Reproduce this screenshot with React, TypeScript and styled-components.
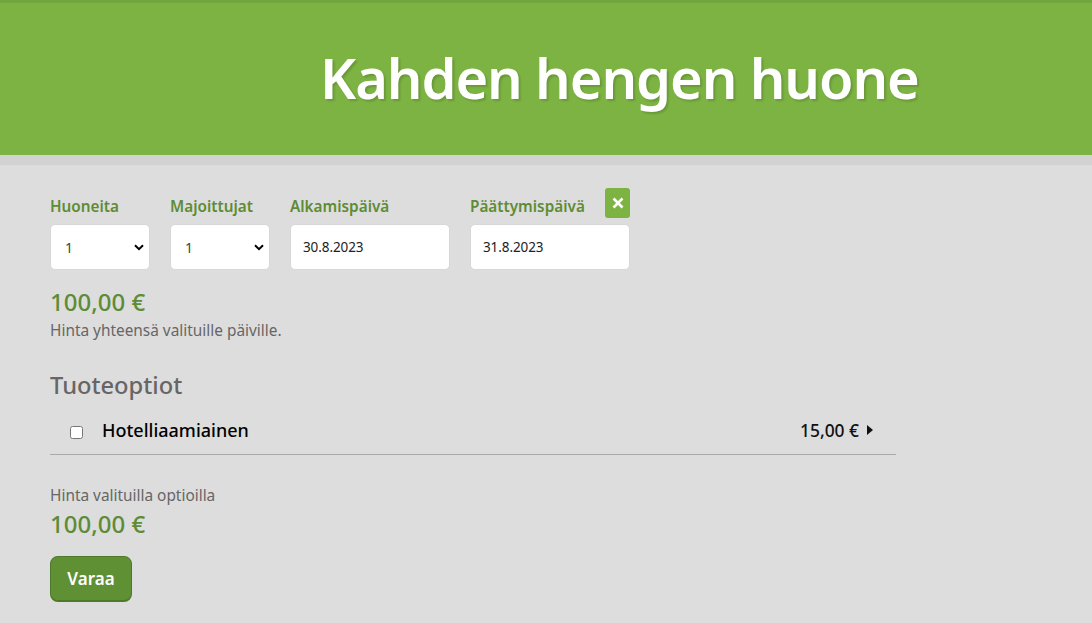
import React from "react";
import styled, { createGlobalStyle } from "styled-components";

const Global = createGlobalStyle`
  html, body { margin: 0; padding: 0; background: #dddddd; }
  body { font-family: "Noto Sans", "Open Sans", sans-serif; height: 623px; overflow: hidden; }
  * { box-sizing: border-box; }
`;

const Header = styled.header`
  height: 165px;
  background: #7cb342;
  border-top: 3px solid #70a63c;
  border-bottom: 10px solid #d2d2d2;
  padding: 42px 0 0 320px;
`;
const Title = styled.h1`
  margin: 0;
  font-size: 56px;
  line-height: 64px;
  font-weight: 600;
  letter-spacing: -1.1px;
  color: #fff;
  text-shadow: 2px 2px 2px rgba(0, 0, 0, 0.15);
  white-space: nowrap;
`;
const Main = styled.main`
  padding: 23px 0 0 50px;
  width: 896px;
`;
const Fields = styled.div`
  display: flex;
  gap: 20px;
  align-items: flex-end;
  height: 82px;
`;
const Field = styled.label<{ $w: number }>`
  display: flex;
  flex-direction: column;
  width: ${(p) => p.$w}px;
`;
const FieldLabel = styled.span`
  font-size: 15.3px;
  line-height: 20px;
  font-weight: 600;
  color: #5d8c35;
  margin-bottom: 8px;
  white-space: nowrap;
`;
const Select = styled.select`
  appearance: none;
  height: 46px;
  width: 100%;
  border: 1px solid #d8d8d8;
  border-radius: 5px;
  padding: 0 0 0 14px;
  font-family: inherit;
  font-size: 14px;
  color: #2d4a3a;
  outline: none;
  background: #fff url("data:image/svg+xml,%3Csvg xmlns='http://www.w3.org/2000/svg' width='10' height='7' viewBox='0 0 10 7'%3E%3Cpath d='M1 1.2 5 5.2 9 1.2' fill='none' stroke='%23000' stroke-width='2'/%3E%3C/svg%3E") no-repeat right 5px center;
`;
const DateInput = styled.input`
  height: 46px;
  width: 100%;
  background: #fff;
  border: 1px solid #d8d8d8;
  border-radius: 5px;
  padding: 0 12px;
  font-family: inherit;
  font-size: 13.5px;
  letter-spacing: -0.1px;
  color: #222;
  outline: none;
`;
const DateField = styled.div`
  position: relative;
`;
const Clear = styled.button`
  position: absolute;
  top: -36px;
  right: 0;
  width: 25px;
  height: 30px;
  border: none;
  border-radius: 3px;
  background: #7cb342;
  color: #fff;
  padding: 0;
  display: flex;
  align-items: center;
  justify-content: center;
`;
const Price = styled.div<{ $top: number }>`
  margin-top: ${(p) => p.$top}px;
  font-size: 24px;
  line-height: 30px;
  font-weight: 500;
  color: #5d8c35;
`;
const Note = styled.p<{ $top: number }>`
  margin: ${(p) => p.$top}px 0 0;
  font-size: 15.4px;
  line-height: 20px;
  color: #666666;
`;
const Section = styled.h2`
  margin: 28px 0 0;
  font-size: 23.7px;
  line-height: 32px;
  font-weight: 500;
  color: #666666;
`;
const Option = styled.div`
  display: flex;
  align-items: center;
  height: 50px;
  margin-top: 4px;
  padding: 0 23px 0 20px;
  border-bottom: 1px solid #a9a9a9;
`;
const Check = styled.input`
  width: 13px;
  height: 13px;
  margin: 6px 19px 0 0;
`;
const OptionName = styled.span`
  flex: 1;
  font-size: 18px;
  font-weight: 500;
  color: #000;
`;
const OptionPrice = styled.span`
  font-size: 17.4px;
  font-weight: 500;
  color: #111;
`;
const Caret = styled.span`
  width: 0;
  height: 0;
  margin: 1px 0 0 8px;
  border-left: 6px solid #111;
  border-top: 5px solid transparent;
  border-bottom: 5px solid transparent;
`;
const Book = styled.button`
  display: block;
  margin-top: 17px;
  width: 82px;
  height: 46px;
  border: 1px solid #4d7a2a;
  border-bottom-width: 2px;
  border-radius: 8px;
  background: #5f9134;
  color: #fff;
  font-family: inherit;
  font-size: 17px;
  font-weight: 600;
  padding: 0;
`;

export default function App() {
  return (
    <>
      <Global />
      <Header>
        <Title>Kahden hengen huone</Title>
      </Header>
      <Main>
        <Fields>
          <Field $w={100}>
            <FieldLabel>Huoneita</FieldLabel>
            <Select defaultValue="1"><option>1</option><option>2</option></Select>
          </Field>
          <Field $w={100}>
            <FieldLabel>Majoittujat</FieldLabel>
            <Select defaultValue="1"><option>1</option><option>2</option></Select>
          </Field>
          <Field $w={160}>
            <FieldLabel>Alkamispäivä</FieldLabel>
            <DateInput defaultValue="30.8.2023" />
          </Field>
          <Field $w={160} as="div">
            <FieldLabel>Päättymispäivä</FieldLabel>
            <DateField>
              <DateInput defaultValue="31.8.2023" />
              <Clear aria-label="Tyhjennä">
                <svg width="12" height="12" viewBox="0 0 12 12">
                  <path d="M1.5 1.5 10.5 10.5M10.5 1.5 1.5 10.5" stroke="#fff" strokeWidth="2.6" />
                </svg>
              </Clear>
            </DateField>
          </Field>
        </Fields>
        <Price $top={17}>100,00 €</Price>
        <Note $top={4}>Hinta yhteensä valituille päiville.</Note>
        <Section>Tuoteoptiot</Section>
        <Option>
          <Check type="checkbox" />
          <OptionName>Hotelliaamiainen</OptionName>
          <OptionPrice>15,00 €</OptionPrice>
          <Caret />
        </Option>
        <Note $top={31}>Hinta valituilla optioilla</Note>
        <Price $top={3}>100,00 €</Price>
        <Book>Varaa</Book>
      </Main>
    </>
  );
}
